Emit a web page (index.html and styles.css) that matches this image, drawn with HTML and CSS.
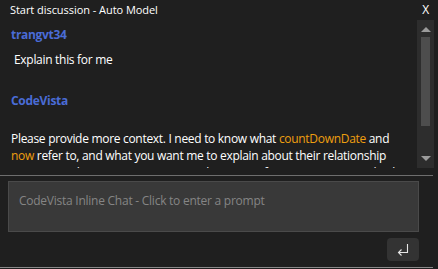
FILE: index.html
```html
<!DOCTYPE html>
<html>
<head>
<meta charset="utf-8">
<link rel="stylesheet" href="styles.css">
</head>
<body>
<div class="panel">
  <header class="titlebar">
    <span class="title">Start discussion - Auto Model</span>
    <span class="close">X</span>
  </header>
  <div class="main">
    <div class="messages">
      <div class="author">trangvt34</div>
      <div class="user-msg">Explain this for me</div>
      <div class="author bot">CodeVista</div>
      <p class="reply">Please provide more context. I need to know what <span class="code">countDownDate</span> and <span class="code">now</span> refer to, and what you want me to explain about their relationship (e.g., any code snippets or context). The more information you provide, the better I can help you.</p>
    </div>
    <div class="scrollbar">
      <svg class="arrow" width="10" height="6" viewBox="0 0 10 6"><path d="M0 5 L5 0 L10 5 Z" fill="#9b9b9b"/></svg>
      <div class="thumb"></div>
      <svg class="arrow down" width="10" height="6" viewBox="0 0 10 6"><path d="M0 0 L10 0 L5 5 Z" fill="#9b9b9b"/></svg>
    </div>
  </div>
  <div class="divider"></div>
  <div class="input">CodeVista Inline Chat - Click to enter a prompt</div>
  <div class="actions">
    <button class="send">
      <svg width="14" height="14" viewBox="0 0 14 14"><path d="M11.5 1 V9.5 H2.5 M5.5 6.5 L2.5 9.5 L5.5 12.5" fill="none" stroke="#e6e6e6" stroke-width="1.1"/></svg>
    </button>
  </div>
  <div class="divider bottom"></div>
</div>
</body>
</html>
```
FILE: styles.css
```css
html, body {
  margin: 0;
  padding: 0;
  background: #1f1f1f;
}
.panel {
  width: 438px;
  height: 269px;
  display: flex;
  flex-direction: column;
  font-family: "Open Sans", "Noto Sans", sans-serif;
  font-size: 12px;
  letter-spacing: -0.3px;
  color: #ffffff;
  overflow: hidden;
}
.titlebar {
  height: 20px;
  display: flex;
  align-items: center;
  justify-content: space-between;
  padding: 0 9px 0 10px;
  box-sizing: border-box;
}
.title {
  font-size: 11px;
  line-height: 20px;
  letter-spacing: -0.05px;
}
.close {
  font-size: 12px;
  line-height: 20px;
}
.main {
  height: 148px;
  display: flex;
}
.messages {
  flex: 1;
  overflow: hidden;
  padding: 6px 8px 0 11px;
}
.author {
  font-weight: 700;
  color: #4a6cd6;
  line-height: 17px;
  font-size: 12px;
}
.user-msg {
  margin-top: 8px;
  padding-left: 3px;
  line-height: 17px;
}
.author.bot {
  margin-top: 24px;
}
.reply {
  margin: 21px 0 0 0;
  line-height: 17px;
}
.code {
  color: #ef9f0f;
}
.scrollbar {
  width: 17px;
  margin-right: 4px;
  background: #2d2d2d;
  display: flex;
  flex-direction: column;
  align-items: center;
}
.arrow {
  margin-top: 7px;
  flex: none;
}
.arrow.down {
  margin-top: auto;
  margin-bottom: 6px;
}
.thumb {
  width: 9px;
  height: 89px;
  margin-top: 4px;
  background: #4d4d4d;
}
.divider {
  height: 1px;
  margin: 7px 5px 0 0;
  background: #6e6e6e;
  flex: none;
}
.input {
  margin: 5px 19px 0 8px;
  border: 1px solid #4a4a4a;
  background: #393939;
  color: #858585;
  padding: 10px 10px 0 10px;
  box-sizing: border-box;
  height: 51px;
  line-height: 18px;
  letter-spacing: -0.25px;
}
.actions {
  display: flex;
  justify-content: flex-end;
  padding-right: 19px;
  margin-top: 6px;
}
.send {
  width: 32px;
  height: 23px;
  border: none;
  border-radius: 4px;
  background: #333333;
  padding: 0;
  display: flex;
  align-items: center;
  justify-content: center;
}
.divider.bottom {
  margin-top: 6px;
  background: #8a8a8a;
}
```
